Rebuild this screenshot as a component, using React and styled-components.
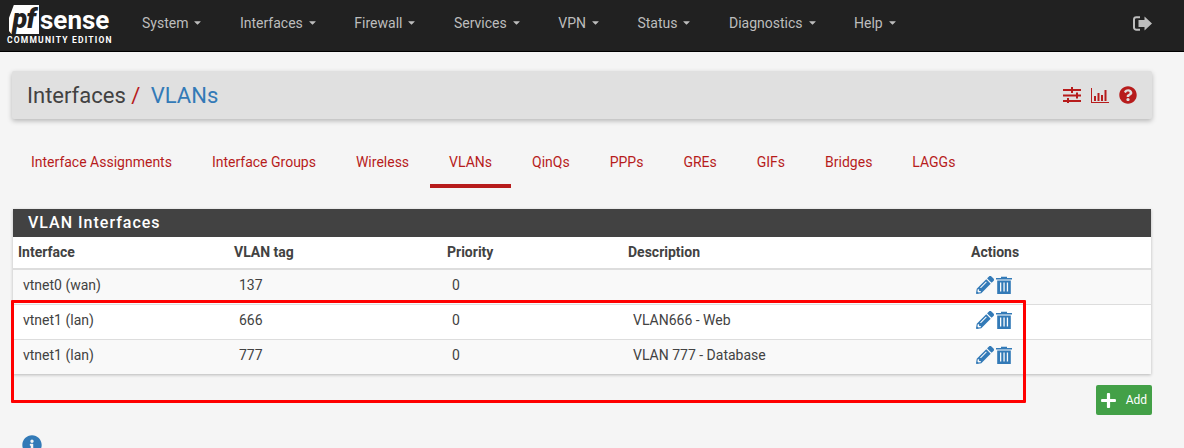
import React from "react";
import styled, { createGlobalStyle } from "styled-components";
import { FaPencilAlt, FaQuestionCircle, FaPlus, FaInfoCircle, FaCaretDown } from "react-icons/fa";

const menus = ["System", "Interfaces", "Firewall", "Services", "VPN", "Status", "Diagnostics", "Help"];
const tabs = ["Interface Assignments", "Interface Groups", "Wireless", "VLANs", "QinQs", "PPPs", "GREs", "GIFs", "Bridges", "LAGGs"];
const rows = [
  { iface: "vtnet0 (wan)", tag: "137", priority: "0", description: "" },
  { iface: "vtnet1 (lan)", tag: "666", priority: "0", description: "VLAN666 - Web" },
  { iface: "vtnet1 (lan)", tag: "777", priority: "0", description: "VLAN 777 - Database" },
];

const SlidersIcon = () => (
  <svg width="18" height="16" viewBox="0 0 18 16" fill="#b71c1c">
    <rect x="0" y="2" width="18" height="2" />
    <rect x="8" y="0" width="2" height="6" />
    <rect x="0" y="7.5" width="18" height="2" />
    <rect x="13" y="5.5" width="2" height="6" />
    <rect x="0" y="13" width="18" height="2" />
    <rect x="4" y="11" width="2" height="5" />
  </svg>
);

const ChartIcon = () => (
  <svg width="18" height="15" viewBox="0 0 18 15" fill="#b71c1c">
    <rect x="0" y="0" width="1" height="15" />
    <rect x="0" y="14" width="18" height="1" />
    <rect x="3" y="8" width="2" height="5" />
    <rect x="6.5" y="5" width="2" height="8" />
    <rect x="10" y="7" width="2" height="6" />
    <rect x="13.5" y="2" width="2" height="11" />
  </svg>
);

const SignOutIcon = () => (
  <svg width="19" height="15" viewBox="0 0 19 15">
    <path d="M7 1.2H3.4A2.4 2.4 0 0 0 1 3.6v7.8a2.4 2.4 0 0 0 2.4 2.4H7" fill="none" stroke="#bdbdbd" strokeWidth="2" />
    <path d="M11.5 0.5L19 7.5l-7.5 7V11H5.5V4h6z" fill="#bdbdbd" />
  </svg>
);

const TrashIcon = () => (
  <svg width="16" height="18" viewBox="0 0 16 18" fill="#337ab7">
    <path d="M5 2V0.8h6V2h5v1.6H0V2z" />
    <path
      fillRule="evenodd"
      d="M1.2 4.4h13.6V18H1.2zM4 6.5v9h1.3v-9zM7.4 6.5v9h1.3v-9zM10.8 6.5v9h1.3v-9z"
    />
  </svg>
);

const App = () => (
  <>
    <GlobalStyle />
    <NavBar>
      <Logo>
        <LogoTop>
          <PfBox>pf</PfBox>
          <Sense>sense</Sense>
        </LogoTop>
        <Edition>COMMUNITY EDITION</Edition>
      </Logo>
      <Menu>
        {menus.map((m) => (
          <MenuItem key={m}>
            {m}
            <FaCaretDown />
          </MenuItem>
        ))}
      </Menu>
      <Logout>
        <SignOutIcon />
      </Logout>
    </NavBar>

    <Page>
      <Breadcrumb>
        <Title>
          Interfaces <Slash>/</Slash> <TitleLink>VLANs</TitleLink>
        </Title>
        <TitleIcons>
          <SlidersIcon />
          <ChartIcon />
          <HelpIcon />
        </TitleIcons>
      </Breadcrumb>

      <Tabs>
        {tabs.map((t) => (
          <Tab key={t} $active={t === "VLANs"}>
            {t}
          </Tab>
        ))}
      </Tabs>

      <Panel>
        <PanelHeading>VLAN Interfaces</PanelHeading>
        <HeadRow>
          <span>Interface</span>
          <span>VLAN tag</span>
          <span>Priority</span>
          <span>Description</span>
          <span>Actions</span>
        </HeadRow>
        {rows.map((r, i) => (
          <Row key={i} $odd={i % 2 === 0}>
            <span>{r.iface}</span>
            <span>{r.tag}</span>
            <span>{r.priority}</span>
            <span>{r.description}</span>
            <Actions>
              <FaPencilAlt />
              <TrashIcon />
            </Actions>
          </Row>
        ))}
      </Panel>

      <ButtonRow>
        <AddButton>
          <FaPlus />
          Add
        </AddButton>
      </ButtonRow>

      <InfoIcon />
      <Highlight />
    </Page>
  </>
);

const GlobalStyle = createGlobalStyle`
  html, body {
    margin: 0;
    height: 448px;
    overflow: hidden;
    background: #f5f5f5;
    font-family: Roboto, "Liberation Sans", sans-serif;
    font-size: 14px;
    color: #424242;
  }
`;

const NavBar = styled.div`
  display: flex;
  align-items: center;
  height: 51px;
  background: #212121;
  border-bottom: 1px solid #000;
`;

const Logo = styled.div`
  display: flex;
  flex-direction: column;
  width: 142px;
  padding: 0 0 2px 7px;
  box-sizing: border-box;
  flex-shrink: 0;
`;

const LogoTop = styled.div`
  display: flex;
  align-items: center;
  height: 30px;
`;

const PfBox = styled.div`
  width: 30px;
  height: 29px;
  margin-left: 2px;
  background: #fff;
  color: #212121;
  font: italic 900 27px/28px Roboto, sans-serif;
  letter-spacing: -0.5px;
  text-align: center;
  clip-path: polygon(16% 0, 100% 0, 100% 100%, 8% 100%, 0 90%, 0 44%);
`;

const Sense = styled.div`
  margin-left: 1px;
  color: #fff;
  font: 700 26px/30px Roboto, sans-serif;
`;

const Edition = styled.div`
  color: #fff;
  font: 700 8.5px/10px Roboto, sans-serif;
  letter-spacing: 1.2px;
  white-space: nowrap;
`;

const Menu = styled.div`
  display: flex;
  flex: 1;
  gap: 37.5px;
  padding-bottom: 6px;
`;

const MenuItem = styled.div`
  display: flex;
  align-items: center;
  gap: 4px;
  color: #bdbdbd;
  font-size: 14px;

  svg {
    width: 11px;
    height: 11px;
    margin-right: -1px;
  }
`;

const Logout = styled.div`
  display: flex;
  margin-right: 32px;
  padding-bottom: 5px;
`;

const Page = styled.div`
  position: relative;
  padding: 19px 32px 0 12px;
`;

const Breadcrumb = styled.div`
  display: flex;
  align-items: center;
  justify-content: space-between;
  height: 48px;
  padding: 0 15px;
  background: #e0e0e0;
  border-radius: 2px;
  box-shadow: 0 2px 5px rgba(0, 0, 0, 0.26);
`;

const Title = styled.div`
  font-size: 22px;
  color: #424242;
  white-space: pre-wrap;
`;

const Slash = styled.span`
  color: #b71c1c;
`;

const TitleLink = styled.span`
  color: #337ab7;
  margin-left: 5px;
`;

const TitleIcons = styled.div`
  display: flex;
  align-items: center;
  gap: 10px;
`;

const HelpIcon = styled(FaQuestionCircle)`
  color: #b71c1c;
  width: 18px;
  height: 18px;
`;

const Tabs = styled.div`
  display: flex;
  gap: 2px;
  height: 51px;
  margin: 18px 0 21px;
`;

const Tab = styled.div`
  display: flex;
  align-items: center;
  padding: 2px 19px 0;
  height: 45px;
  color: #b71c1c;
  border-bottom: 4px solid ${(p) => (p.$active ? "#b71c1c" : "transparent")};
`;

const Panel = styled.div`
  margin: 0 1px;
  background: #fff;
  box-shadow: 0 1px 3px rgba(0, 0, 0, 0.25);
`;

const PanelHeading = styled.div`
  height: 28px;
  padding-left: 15px;
  background: #424242;
  color: #fff;
  font-size: 16px;
  font-weight: 500;
  letter-spacing: 1px;
  line-height: 28px;
`;

const cols = "216px 213px 181px 343px 1fr";

const HeadRow = styled.div`
  display: grid;
  grid-template-columns: ${cols};
  align-items: center;
  height: 29px;
  padding-bottom: 2px;
  border-bottom: 2px solid #ddd;
  font-weight: 700;
  font-size: 14px;

  span {
    padding-left: 5px;
  }
`;

const Row = styled.div`
  display: grid;
  grid-template-columns: ${cols};
  align-items: center;
  height: 29px;
  padding-bottom: 5px;
  background: ${(p) => (p.$odd ? "#f9f9f9" : "#fff")};
  border-bottom: 1px solid #ddd;

  &:last-child {
    border-bottom: none;
  }

  > span {
    padding-left: 10px;
  }
`;

const Actions = styled.div`
  display: flex;
  align-items: center;
  gap: 2px;
  padding: 1px 0 0 10px;
  color: #337ab7;

  svg:first-child {
    width: 18px;
    height: 18px;
  }
`;

const ButtonRow = styled.div`
  display: flex;
  justify-content: flex-end;
  margin-top: 11px;
`;

const AddButton = styled.button`
  display: flex;
  align-items: center;
  justify-content: space-between;
  width: 56px;
  height: 30px;
  padding: 0 5px 0 4px;
  background: #43a047;
  border: none;
  border-radius: 2px;
  color: #fff;
  font: 400 12px Roboto, sans-serif;

  svg {
    width: 17px;
    height: 17px;
  }
`;

const InfoIcon = styled(FaInfoCircle)`
  display: block;
  width: 20px;
  height: 20px;
  margin: 20px 0 0 10px;
  color: #337ab7;
`;

const Highlight = styled.div`
  position: absolute;
  left: 11px;
  top: 248px;
  width: 1009px;
  height: 97px;
  border: 3px solid #f00;
  border-radius: 1px;
  pointer-events: none;
`;

export default App;
